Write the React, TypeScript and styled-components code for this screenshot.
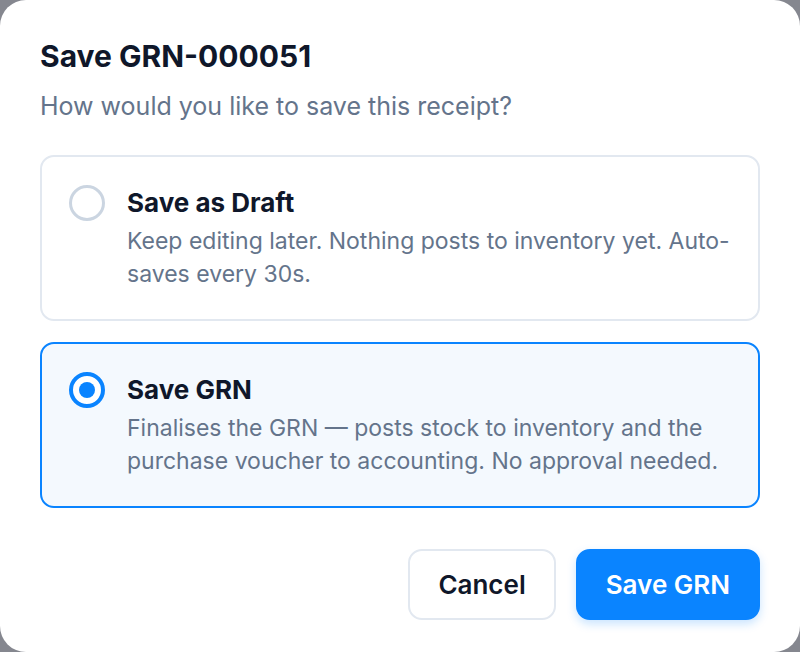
import React, { useState } from "react";
import styled, { createGlobalStyle, css } from "styled-components";

const GlobalStyle = createGlobalStyle`
  html, body {
    margin: 0;
    padding: 0;
    background: #85878f;
  }
  body {
    font-family: Inter, "Noto Sans", "Liberation Sans", sans-serif;
    -webkit-font-smoothing: antialiased;
  }
  * { box-sizing: border-box; }
`;

const Dialog = styled.div`
  width: 800px;
  height: 652px;
  background: #ffffff;
  border-radius: 26px;
  padding: 38px 40px 32px;
  display: flex;
  flex-direction: column;
`;

const Title = styled.h2`
  margin: 0;
  font-size: 30px;
  line-height: 36px;
  font-weight: 700;
  color: #0f172a;
`;

const Subtitle = styled.p`
  margin: 16px 0 0;
  font-size: 25px;
  line-height: 32px;
  font-weight: 400;
  color: #64748b;
`;

const Options = styled.div`
  margin-top: 33px;
  display: flex;
  flex-direction: column;
  gap: 21px;
`;

const OptionCard = styled.label<{ $selected: boolean }>`
  display: flex;
  align-items: flex-start;
  gap: 22px;
  padding: 28px 27px 28px;
  border-radius: 14px;
  border: 2px solid #e2e8f0;
  background: #ffffff;
  cursor: pointer;
  ${(p) =>
    p.$selected &&
    css`
      border-color: #0a84ff;
      background: #f4f9fe;
    `}
`;

const Radio = styled.span<{ $selected: boolean }>`
  flex: none;
  width: 36px;
  height: 36px;
  border-radius: 50%;
  border: 3px solid #cbd5e1;
  background: #ffffff;
  display: flex;
  align-items: center;
  justify-content: center;
  ${(p) =>
    p.$selected &&
    css`
      border: 4px solid #0a84ff;
      &::after {
        content: "";
        width: 16px;
        height: 16px;
        border-radius: 50%;
        background: #0a84ff;
      }
    `}
`;

const OptionText = styled.div`
  display: flex;
  flex-direction: column;
  gap: 4px;
  min-width: 0;
`;

const OptionTitle = styled.div`
  font-size: 26px;
  line-height: 36px;
  font-weight: 700;
  color: #0f172a;
`;

const OptionDesc = styled.div`
  font-size: 23px;
  line-height: 33px;
  color: #64748b;
`;

const Footer = styled.div`
  margin-top: auto;
  display: flex;
  justify-content: flex-end;
  gap: 20px;
`;

const Button = styled.button<{ $primary?: boolean }>`
  height: 71px;
  padding: 0 28px;
  border-radius: 14px;
  font-family: inherit;
  font-size: 26px;
  font-weight: 600;
  cursor: pointer;
  border: 2px solid #e2e8f0;
  background: #ffffff;
  color: #0f172a;
  ${(p) =>
    p.$primary &&
    css`
      border-color: #0a84ff;
      background: #0a84ff;
      color: #ffffff;
      box-shadow: 0 4px 10px rgba(10, 132, 255, 0.22);
    `}
`;

const options = [
  {
    id: "draft",
    title: "Save as Draft",
    desc: "Keep editing later. Nothing posts to inventory yet. Auto-saves every 30s.",
  },
  {
    id: "grn",
    title: "Save GRN",
    desc: "Finalises the GRN — posts stock to inventory and the purchase voucher to accounting. No approval needed.",
  },
];

export default function App() {
  const [selected, setSelected] = useState("grn");
  return (
    <>
      <GlobalStyle />
      <Dialog role="dialog">
        <Title>Save GRN-000051</Title>
        <Subtitle>How would you like to save this receipt?</Subtitle>
        <Options>
          {options.map((o) => (
            <OptionCard
              key={o.id}
              $selected={selected === o.id}
              onClick={() => setSelected(o.id)}
            >
              <Radio $selected={selected === o.id} />
              <OptionText>
                <OptionTitle>{o.title}</OptionTitle>
                <OptionDesc>{o.desc}</OptionDesc>
              </OptionText>
            </OptionCard>
          ))}
        </Options>
        <Footer>
          <Button>Cancel</Button>
          <Button $primary>Save GRN</Button>
        </Footer>
      </Dialog>
    </>
  );
}
